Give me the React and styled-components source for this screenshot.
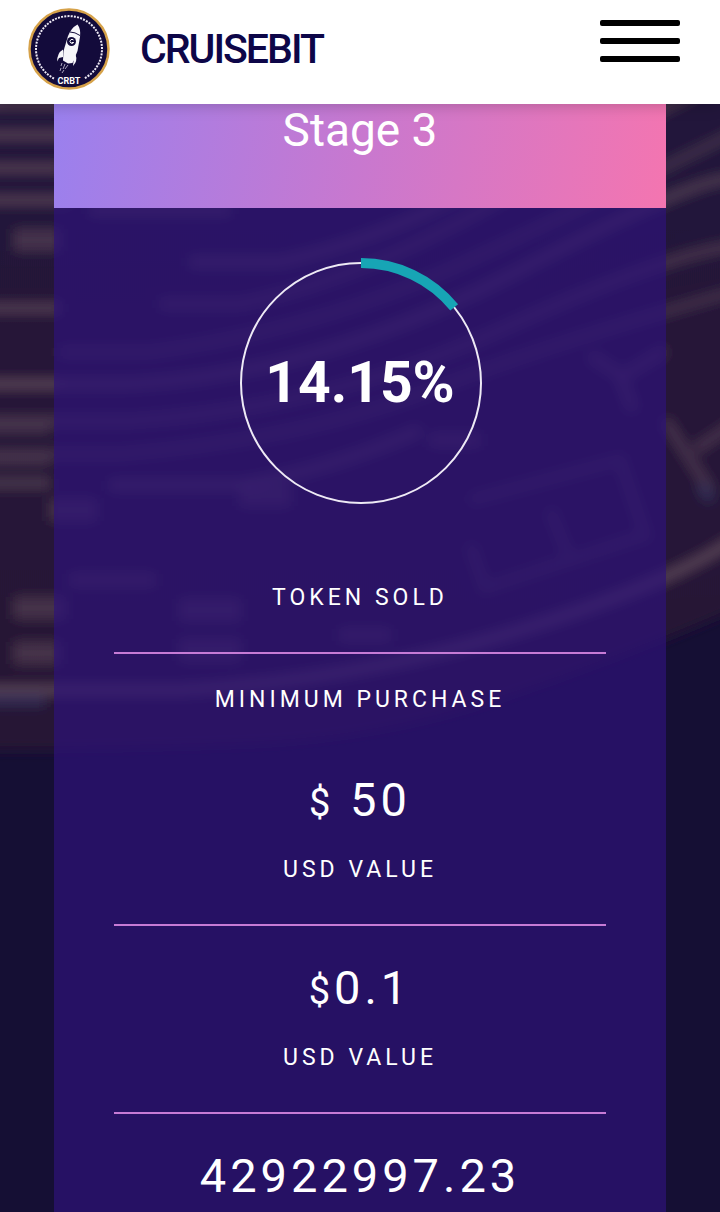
import React from "react";
import styled, { createGlobalStyle } from "styled-components";

const GlobalStyle = createGlobalStyle`
  * { box-sizing: border-box; }
  body {
    margin: 0;
    background: #150f33;
    color: #fff;
    font-family: Roboto, "Liberation Sans", sans-serif;
  }
`;

const Header = styled.header`
  position: relative;
  z-index: 1;
  display: flex;
  align-items: flex-start;
  justify-content: space-between;
  height: 104px;
  padding: 8px 40px 0 28px;
  background: #fff;
  box-shadow: 0 2px 14px rgba(0, 0, 0, 0.2);
`;

const Brand = styled.a`
  display: flex;
  align-items: center;
  gap: 30px;
  color: #0d0648;
  font-size: 41px;
  font-weight: 500;
  line-height: 82px;
  letter-spacing: -2px;
  text-decoration: none;
`;

const LogoMark = styled.svg`
  width: 82px;
  height: 82px;
  letter-spacing: 0;
`;

const MenuButton = styled.button`
  display: grid;
  gap: 12px;
  width: 80px;
  margin: 12px 0 0;
  padding: 0;
  border: 0;
  background: none;
  cursor: pointer;
`;

const Bar = styled.span`
  height: 6px;
  border-radius: 2px;
  background: #000;
`;

const Main = styled.main`
  position: relative;
  padding: 0 54px;
`;

const BackdropArt = styled.svg`
  position: absolute;
  inset: 0;
  width: 100%;
  height: 100%;
`;

const Card = styled.article`
  position: relative;
  background: rgba(45, 19, 121, 0.7);
  text-align: center;
`;

const CardTitle = styled.h1`
  margin: 0;
  padding-bottom: 52px;
  background: linear-gradient(100deg, #9a80ee, #c878cf 50%, #f475b0);
  font-size: 46px;
  font-weight: 400;
  line-height: 52px;
`;

const CardBody = styled.div`
  padding: 50px 60px 0;
`;

const Stat = styled.section`
  padding: ${(p) => p.$top}px 0 ${(p) => (p.$last ? 0 : 36)}px;
  border-bottom: ${(p) => (p.$last ? "none" : "2px solid #c77bd6")};
`;

const Label = styled.p`
  margin: ${(p) => p.$top || 0}px 0 0;
  font-size: 23px;
  line-height: 36px;
  letter-spacing: 4px;
  text-transform: uppercase;
`;

const Value = styled.p`
  margin: ${(p) => p.$top || 0}px 0 0;
  font-size: 47px;
  font-weight: 400;
  line-height: 72px;
  letter-spacing: 4px;
`;

const Currency = styled.span`
  font-size: 38px;
  line-height: 1;
`;

const Ring = styled.div`
  display: grid;
  place-items: center;

  > * { grid-area: 1 / 1; }
`;

const Percent = styled.strong`
  font-size: 57px;
  font-weight: 700;
  line-height: 72px;
`;

function Logo() {
  return (
    <LogoMark viewBox="0 0 82 82" aria-hidden="true">
      <circle cx="41" cy="41" r="39.500" fill="#130b3b" stroke="#d6a24a" strokeWidth="2.500" />
      <path
        d="M26 70.500A33 33 0 1 1 56 70.500"
        fill="none"
        stroke="#eeeaf5"
        strokeWidth="2"
        strokeDasharray="2 1.200"
      />
      <path d="M49.500 16.500Q53 21 52 29L49.500 43L44.500 55L40 55.500L35 52.500L35.500 43L40 28Q43 20 49.500 16.500Z" fill="#f7f6fa" />
      <path d="M35 41.500Q29 45 29.200 53.500L31 50L35 49Z" fill="#f7f6fa" />
      <path d="M47.500 46.500Q50 53 45 58L45.500 53L44 51Z" fill="#f7f6fa" />
      <path d="M42 24Q47 24 52 27.500" fill="none" stroke="#130b3b" />
      <circle cx="43.500" cy="33.500" r="4.500" fill="#130b3b" />
      <path d="M45.500 32a2 2 0 1 0 .2 2.500h-2" fill="none" stroke="#fff" />
      <path d="M34 55l-1 3M37 56l-2 5M40 57l-3 4M33 60l-1 3M36 62l-2 3" stroke="#aaa4bd" />
      <text
        x="41"
        y="76"
        textAnchor="middle"
        fontFamily="'Liberation Sans Narrow', Roboto, sans-serif"
        fontSize="9"
        fontWeight="700"
        fill="#fff"
      >
        CRBT
      </text>
    </LogoMark>
  );
}

function Backdrop() {
  return (
    <BackdropArt viewBox="0 104 720 1108" preserveAspectRatio="none" aria-hidden="true">
      <defs>
        <filter id="soft" x="-10%" y="-10%" width="120%" height="120%">
          <feGaussianBlur stdDeviation="6" />
        </filter>
        <linearGradient id="night" x1="0" y1="0" x2="0" y2="1">
          <stop offset="0" stopColor="#23183b" />
          <stop offset="1" stopColor="#281835" />
        </linearGradient>
      </defs>
      <rect y="104" width="720" height="1108" fill="#150f34" />
      <g filter="url(#soft)" fill="none" stroke="#5a4558">
        <path d="M-20 80H740V608Q620 660 500 700T250 745T-20 750Z" fill="url(#night)" stroke="none" />
        <g strokeWidth="10">
          <path d="M-20 104H60M-20 135H90M-20 168H60M-20 200H70M-20 308H60" opacity=".8" />
          <path d="M-20 384H130Q320 375 520 270T740 180" opacity=".7" />
          <path d="M-20 384H60" opacity=".7" />
          <path d="M-20 421H130Q330 408 500 330T740 245" opacity=".6" />
          <path d="M-20 428H50M-20 460H50" opacity=".5" />
          <path d="M-20 454H120Q300 440 430 390T740 290" opacity=".5" />
          <path d="M-20 483H50M110 485H240Q330 470 420 430" opacity=".7" />
          <path d="M60 352H150Q320 330 470 260T740 130" opacity=".5" />
          <path d="M160 304H240Q360 280 500 200T700 90" opacity=".6" />
          <path d="M190 262H280Q380 240 470 190" opacity=".7" />
          <path d="M90 210H230" opacity=".7" />
          <path d="M-20 690H180Q360 680 520 630T740 535" opacity=".9" />
          <path d="M590 355L620 375L633 410M620 378L665 350M665 420L710 490M695 450L740 420" opacity=".6" />
          <path d="M470 500L620 460L645 535L485 588L470 545M550 510L570 560" opacity=".4" />
        </g>
        <g strokeWidth="22" opacity=".6">
          <path d="M14 240H60M14 608H65M14 653H60M180 610H240M180 650H240M240 495H290M50 510H96" />
          <path d="M70 580H155M340 635H390M430 440H480" strokeWidth="12" />
        </g>
        <path d="M-20 700H45M700 485L712 500" stroke="#34345e" strokeWidth="12" opacity=".7" />
      </g>
    </BackdropArt>
  );
}

function ProgressRing({ value }) {
  return (
    <Ring>
      <svg width="250" height="250" viewBox="0 0 250 250" fill="none" aria-hidden="true">
        <circle cx="126" cy="125" r="120" stroke="#eeeaf5" strokeWidth="2" />
        <circle
          cx="126"
          cy="125"
          r="120"
          stroke="#17a5b5"
          strokeWidth="10"
          pathLength="100"
          strokeDasharray={`${value} 100`}
          transform="rotate(-90 126 125)"
        />
      </svg>
      <Percent>{value}%</Percent>
    </Ring>
  );
}

export default function App() {
  return (
    <>
      <GlobalStyle />
      <Header>
        <Brand href="#home">
          <Logo />
          CRUISEBIT
        </Brand>
        <MenuButton type="button" aria-label="Open menu">
          <Bar />
          <Bar />
          <Bar />
        </MenuButton>
      </Header>
      <Main>
        <Backdrop />
        <Card>
          <CardTitle>Stage 3</CardTitle>
          <CardBody>
            <Stat $top={0}>
              <ProgressRing value={14.15} />
              <Label $top={72}>Token sold</Label>
            </Stat>
            <Stat $top={28}>
              <Label>Minimum purchase</Label>
              <Value $top={46}>
                <Currency>$</Currency> 50
              </Value>
              <Label $top={16}>USD value</Label>
            </Stat>
            <Stat $top={26}>
              <Value>
                <Currency>$</Currency>0.1
              </Value>
              <Label $top={16}>USD value</Label>
            </Stat>
            <Stat $top={26} $last>
              <Value>42922997.23</Value>
            </Stat>
          </CardBody>
        </Card>
      </Main>
    </>
  );
}
